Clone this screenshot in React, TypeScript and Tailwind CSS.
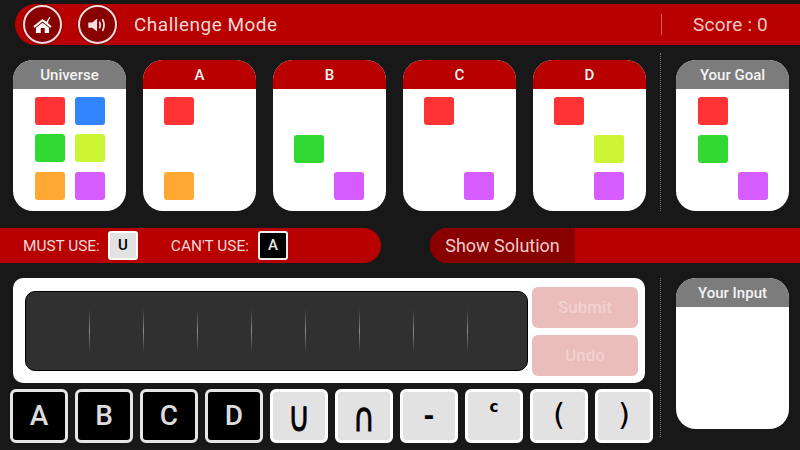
import { Fragment } from 'react';

const RED = 'bg-[#ff3333]';
const BLUE = 'bg-[#3385ff]';
const GREEN = 'bg-[#33d933]';
const LIME = 'bg-[#ccf533]';
const ORANGE = 'bg-[#ffa833]';
const PURPLE = 'bg-[#d65cff]';

interface SetCard {
  title: string;
  grey?: boolean;
  cells: (string | null)[];
}

const sets: SetCard[] = [
  { title: 'A', cells: [RED, null, null, null, ORANGE, null] },
  { title: 'B', cells: [null, null, GREEN, null, null, PURPLE] },
  { title: 'C', cells: [RED, null, null, null, null, PURPLE] },
  { title: 'D', cells: [RED, null, null, LIME, null, PURPLE] },
];

const keys: { label: string; dark?: boolean; cls?: string; glyph?: string }[] = [
  { label: 'A', dark: true },
  { label: 'B', dark: true },
  { label: 'C', dark: true },
  { label: 'D', dark: true },
  { label: '∪', cls: 'text-[30px]', glyph: 'scale-y-[1.4] [-webkit-text-stroke:0.6px_black]' },
  { label: '∩', cls: 'text-[30px]', glyph: 'scale-y-[1.35] [-webkit-text-stroke:0.6px_black]' },
  { label: '-', cls: 'font-bold text-[26px]' },
  { label: 'c', cls: 'font-bold text-[15px] pb-[17px]' },
  { label: '(', cls: 'text-[31px] font-medium pb-[3px]' },
  { label: ')', cls: 'text-[31px] font-medium pb-[3px]' },
];

function HomeIcon() {
  return (
    <svg viewBox="0 0 24 20" className="w-[21px] h-[18px]" fill="white">
      <path d="M12 3 L1.5 11.5 L3 13 L12 6 L21 13 L22.5 11.5 L18.5 8.2 L18.5 6 L21 1 L20 .5 L17 5.5 L16.5 6.4 Z" />
      <path fillRule="evenodd" d="M4.5 13 L12 7.3 L19.5 13 L19.5 19 L4.5 19 Z M10 13.5 L10 19 L14.5 19 L14.5 13.5 Z" />
    </svg>
  );
}

function SoundIcon() {
  return (
    <svg viewBox="0 0 24 20" className="w-[21px] h-[18px]">
      <path d="M1.5 7 L6 7 L11.5 2.5 L11.5 17.5 L6 13 L1.5 13 Z" fill="#f3dede" />
      <path d="M14.5 7 Q16 10 14.5 13" stroke="#f3dede" strokeWidth="2" fill="none" strokeLinecap="round" />
      <path d="M18 4 Q21 10 18 16" stroke="#f3dede" strokeWidth="2" fill="none" strokeLinecap="round" />
    </svg>
  );
}

function RoundBtn({ children }: { children: React.ReactNode }) {
  return (
    <div className="w-[39px] h-[39px] rounded-full bg-[#880000] border-2 border-[#f0dcdc] flex items-center justify-center shadow-[0_0_0_1px_#8c0000]">
      {children}
    </div>
  );
}

function Card({ title, grey, cells, pad = 'pl-[21px]', top = 'pt-[8px]' }: SetCard & { pad?: string; top?: string }) {
  return (
    <div className="w-[113px] h-[151px] rounded-[20px] bg-white overflow-hidden shrink-0">
      <div
        className={`h-[29px] pt-[1px] flex items-center justify-center text-[15px] font-medium text-[#f4f4f4] ${grey ? 'bg-[#7c7c7c]' : 'bg-[#b80000]'}`}
      >
        {title}
      </div>
      <div className={`grid grid-cols-[30px_30px] gap-x-[10px] gap-y-[9.5px] ${pad} ${top}`}>
        {cells.map((c, i) => (
          <div key={i} className={`h-[28px] rounded-[3px] ${c ?? ''}`} />
        ))}
      </div>
    </div>
  );
}

function SmallKey({ label, dark }: { label: string; dark?: boolean }) {
  return (
    <div
      className={`w-[30px] h-[29px] rounded-[3px] border-2 flex items-center justify-center text-[15px] font-medium ${dark ? 'bg-black border-[#eeeeee] text-[#e6e6e6]' : 'bg-[#e2e2e2] border-white text-black'}`}
    >
      {label}
    </div>
  );
}

export default function App() {
  return (
    <div className="w-[800px] h-[450px] bg-[#181818] overflow-hidden flex flex-col font-['Roboto',sans-serif]">
      {/* top bar */}
      <div className="mt-[4px] ml-[15px] h-[41px] bg-[#b80000] rounded-l-[21px] flex items-center pl-[8px] text-[19px] text-[#f3d8d8]">
        <RoundBtn>
          <HomeIcon />
        </RoundBtn>
        <div className="ml-[16px]">
          <RoundBtn>
            <SoundIcon />
          </RoundBtn>
        </div>
        <span className="ml-[17px] pt-[2px] tracking-[0.5px]">Challenge Mode</span>
        <div className="ml-auto w-px h-[21px] bg-[#d85c5c]" />
        <span className="ml-[31px] mr-[32px] pt-[2px] text-[#f0c8c8] tracking-[0.2px]">Score : 0</span>
      </div>

      {/* sets */}
      <div className="mt-[8px] h-[158px] flex items-end pl-[13px]">
        <div className="flex gap-[17px]">
          <Card title="Universe" grey pad="pl-[22px]" top="pt-[7.5px]" cells={[RED, BLUE, GREEN, LIME, ORANGE, PURPLE]} />
          {sets.map((s) => (
            <Fragment key={s.title}>
              <Card {...s} />
            </Fragment>
          ))}
        </div>
        <div className="ml-[14px] h-[158px] border-l border-dotted border-[#777777]" />
        <div className="ml-[15px]">
          <Card title="Your Goal" grey pad="pl-[22px]" cells={[RED, null, GREEN, null, null, PURPLE]} />
        </div>
      </div>

      {/* constraints */}
      <div className="mt-[17px] h-[35px] flex">
        <div className="w-[381px] bg-[#b80000] rounded-r-[18px] flex items-center pl-[23px] text-[15.4px] text-[#f3d8d8]">
          <span className="pt-[2px]">MUST USE:</span>
          <div className="ml-[8px]">
            <SmallKey label="U" />
          </div>
          <span className="ml-[33px] pt-[2px]">CAN'T USE:</span>
          <div className="ml-[9px]">
            <SmallKey label="A" dark />
          </div>
        </div>
        <div className="ml-[49px] flex-1 bg-[#b80000] rounded-l-[18px] overflow-hidden">
          <div className="w-[145px] h-full pb-[1px] bg-[#880000] flex items-center justify-center text-[18px] text-[#f0cccc]">
            Show Solution
          </div>
        </div>
      </div>

      {/* input area */}
      <div className="mt-[15px] flex pl-[10px]">
        <div className="w-[643px] shrink-0">
          <div className="ml-[3px] w-[632px] h-[105px] bg-white rounded-[10px] flex items-center pl-[12px]">
            <div className="w-[503px] h-[80px] bg-[#303030] border border-black rounded-[10px] flex items-center pl-[63px] gap-[53px] shrink-0">
              {Array.from({ length: 8 }).map((_, i) => (
                <div
                  key={i}
                  className="w-px h-[44px] bg-gradient-to-b from-transparent via-[#8a8a8a] to-transparent"
                />
              ))}
            </div>
            <div className="ml-[4px] mt-[1px] flex flex-col gap-[7px]">
              <div className="w-[106px] h-[41px] rounded-[6px] bg-[#ebbcbc] flex items-center justify-center pt-[1px] text-[17px] font-medium text-[#f2d0d0]">
                Submit
              </div>
              <div className="w-[106px] h-[41px] rounded-[6px] bg-[#ebbcbc] flex items-center justify-center pt-[1px] text-[17px] font-medium text-[#f2d0d0]">
                Undo
              </div>
            </div>
          </div>
          <div className="mt-[6px] flex gap-[7px] font-['DejaVu_Sans','Roboto',sans-serif]">
            {keys.map((k) => (
              <div
                key={k.label}
                className={`w-[58px] h-[54px] rounded-[6px] border-[3px] flex items-center justify-center overflow-hidden ${k.dark ? "bg-black border-[#e6e6e6] text-[#dcdcdc] text-[28px] font-['Roboto',sans-serif] font-medium" : 'bg-[#e2e2e2] border-white text-black'} ${k.cls ?? ''}`}
              >
                <span className={`inline-block ${k.glyph ?? ''}`}>{k.label}</span>
              </div>
            ))}
          </div>
        </div>
        <div className="ml-[7px] h-[159px] border-l border-dotted border-[#777777]" />
        <div className="ml-[15px] w-[113px] h-[151px] rounded-[20px] bg-white overflow-hidden">
          <div className="h-[29px] pt-[1px] bg-[#7c7c7c] flex items-center justify-center text-[15px] font-medium text-[#f4f4f4]">
            Your Input
          </div>
        </div>
      </div>
    </div>
  );
}
